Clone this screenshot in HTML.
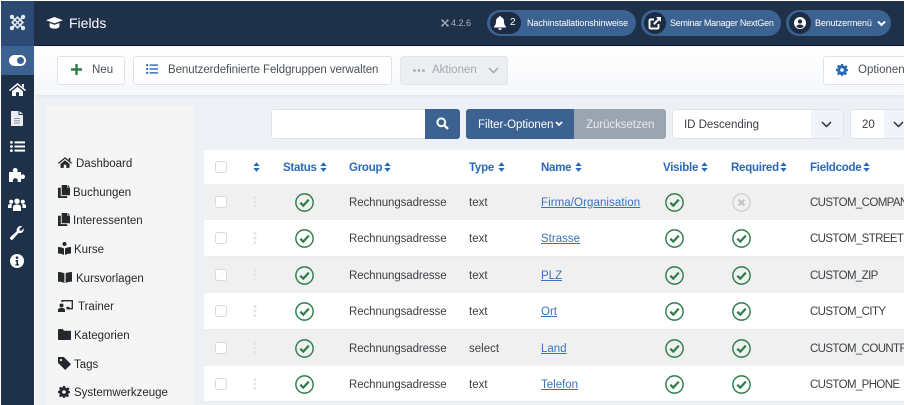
<!DOCTYPE html>
<html lang="de"><head><meta charset="utf-8"><title>Fields</title>
<style>
*{box-sizing:border-box}
html,body{margin:0;padding:0;background:#fff}
body{width:905px;height:405px;overflow:hidden;position:relative;font-family:"Liberation Sans",sans-serif;font-size:12px;color:#3a3f45}
.a{position:absolute;white-space:nowrap}
svg{position:absolute;display:block}
.btn{position:absolute;background:#fff;border:1px solid #dfe3e7;border-radius:3px;height:29px;top:56px}
.th{position:absolute;top:161px;font-weight:bold;color:#2a69b8;font-size:11.5px;white-space:nowrap;line-height:14px;letter-spacing:-.25px}
.row{position:absolute;left:204px;width:700px;height:36.4px}
.row.g{background:#f0f0f0}.row.w{background:#fff;border-bottom:1px solid #e9edf2}
.t{position:absolute;white-space:nowrap;font-size:11.5px;color:#3b3f44;line-height:14px;top:12px}
.r{letter-spacing:-.1px}
.c{font-size:11.5px;letter-spacing:-.62px;left:606px}
.l{color:#3a72bd;text-decoration:underline}
.cb{position:absolute;left:11px;width:12px;height:12px;border:1px solid #d8dade;border-radius:3px;background:#fff}
.m{position:absolute;font-size:11.5px;color:#24282c;white-space:nowrap;line-height:14px;margin-top:1px}
.bt{font-size:11.5px;color:#4a5058;line-height:15px}
</style></head><body>
<svg width="0" height="0"><defs>
<symbol id="ok" viewBox="0 0 20 20"><circle cx="10" cy="10" r="9.100" fill="none" stroke="#2f7d4a" stroke-width="1.500"/><path d="M5.600 10.200l3.100 3.100 5.800-6.300" fill="none" stroke="#2f7d4a" stroke-width="2.400"/></symbol>
<symbol id="no" viewBox="0 0 20 20"><circle cx="10" cy="10" r="9.100" fill="none" stroke="#d2d2d2" stroke-width="1.500"/><path d="M7 7l6 6M13 7l-6 6" fill="none" stroke="#c4c4c4" stroke-width="2.400"/></symbol>
<symbol id="sort" viewBox="0 0 8 11"><path d="M4 0l3.600 4.300H.4zM4 11L.4 6.700h7.200z" fill="#2a69b8"/></symbol>
<symbol id="doc" viewBox="0 0 13 14"><path d="M4 0h6v3h3v8H4z" fill="#24282c"/><path d="M10.600 0L13 2.400h-2.400zM0 3h3v9h7v2H0z" fill="#24282c"/></symbol>
<symbol id="dots" viewBox="0 0 4 12"><circle cx="2" cy="1.500" r="1.400" fill="#e3e3e3"/><circle cx="2" cy="6" r="1.400" fill="#e3e3e3"/><circle cx="2" cy="10.500" r="1.400" fill="#e3e3e3"/></symbol>
</defs></svg>

<!-- main background -->
<div class="a" style="left:35px;top:46px;width:869px;height:359px;background:#edf1f6"></div>
<div class="a" style="left:35px;top:47px;width:869px;height:48px;background:linear-gradient(#fff,#f5f7fa);box-shadow:0 1px 3px rgba(120,140,170,.12)"></div>

<!-- header -->
<div class="a" style="left:1px;top:1px;width:903px;height:45px;background:#1f3049"></div>
<div class="a" style="left:1px;top:1px;width:33px;height:45px;background:#2c4a73"></div>
<div class="a" style="left:35px;top:45px;width:869px;height:1px;background:#101b2b"></div>
<svg style="left:9px;top:14px" width="17" height="17" viewBox="0 0 15 15"><g fill="none" stroke="#e4e8ee" stroke-width="1.500"><path d="M3 3l2 2M12 3l-2 2M3 12l2-2M12 12l-2-2"/><path d="M7.500 2.800L12.200 7.500 7.500 12.200 2.800 7.500z"/><path d="M5.200 5.200l4.600 4.600M9.800 5.200l-4.600 4.600" stroke-width="1.200"/></g><g fill="#e4e8ee"><circle cx="2.600" cy="2.600" r="1.900"/><circle cx="12.400" cy="2.600" r="1.900"/><circle cx="2.600" cy="12.400" r="1.900"/><circle cx="12.400" cy="12.400" r="1.900"/></g></svg>
<svg style="left:46px;top:17px" width="17" height="13" viewBox="0 0 17 13"><path d="M8.500 0L17 3.200 8.500 6.400 0 3.200z" fill="#fff"/><path d="M3.600 6v3.200c0 1.400 2.200 2.400 4.900 2.400s4.900-1 4.900-2.400V6L8.500 7.900z" fill="#fff"/></svg>
<div class="a" style="left:69px;top:15px;font-size:14px;color:#fff;line-height:17px">Fields</div>

<svg style="left:441px;top:19px" width="8" height="8" viewBox="0 0 15 15"><g fill="none" stroke="#a9b3c1" stroke-width="2.400"><path d="M3 3l9 9M12 3l-9 9"/></g><g fill="#a9b3c1"><circle cx="2.600" cy="2.600" r="2"/><circle cx="12.400" cy="2.600" r="2"/><circle cx="2.600" cy="12.400" r="2"/><circle cx="12.400" cy="12.400" r="2"/></g></svg>
<div class="a" style="left:451px;top:18px;font-size:9px;color:#aab4c2;line-height:11px">4.2.6</div>

<div class="a" style="left:487px;top:10px;width:149px;height:26px;border-radius:13px;background:#3b6290"></div>
<div class="a" style="left:490px;top:12px;width:31px;height:22px;border-radius:11px;background:#1c2c44"></div>
<svg style="left:494px;top:16px" width="12" height="14" viewBox="0 0 12 14"><path d="M6 0c.7 0 1 .5 1 1.100C9.200 1.600 10 3.400 10 5.500c0 3 1 4 2 5v1H0v-1c1-1 2-2 2-5C2 3.400 2.800 1.600 5 1.100 5 .5 5.300 0 6 0z" fill="#fff"/><path d="M4.300 12.300h3.400a1.700 1.700 0 0 1-3.400 0z" fill="#fff"/></svg>
<div class="a" style="left:510px;top:17px;font-size:10px;color:#fff;line-height:12px">2</div>
<div class="a" style="left:527px;top:17px;font-size:9px;color:#fff;line-height:12px;letter-spacing:-.08px">Nachinstallationshinweise</div>

<div class="a" style="left:641px;top:10px;width:140px;height:26px;border-radius:13px;background:#3b6290"></div>
<div class="a" style="left:644px;top:12px;width:22px;height:22px;border-radius:11px;background:#1c2c44"></div>
<svg style="left:648px;top:16px" width="14" height="14" viewBox="0 0 14 14"><path d="M10.500 8v3.500a1 1 0 0 1-1 1h-7a1 1 0 0 1-1-1v-7a1 1 0 0 1 1-1H6" fill="none" stroke="#fff" stroke-width="1.900"/><path d="M8 1h5v5l-1.800-1.800L6.500 9 5 7.500l4.800-4.700z" fill="#fff"/></svg>
<div class="a" style="left:670px;top:17px;font-size:9px;color:#fff;line-height:12px;letter-spacing:-.26px">Seminar Manager NextGen</div>

<div class="a" style="left:786px;top:10px;width:105px;height:26px;border-radius:13px;background:#3b6290"></div>
<div class="a" style="left:789px;top:12px;width:22px;height:22px;border-radius:11px;background:#1c2c44"></div>
<svg style="left:794px;top:17px" width="12" height="12" viewBox="0 0 12 12"><circle cx="6" cy="6" r="6" fill="#fff"/><circle cx="6" cy="4.500" r="2.100" fill="#1c2c44"/><path d="M2.300 9.600C3 8.100 4.300 7.500 6 7.500s3 .6 3.700 2.100A5 5 0 0 1 6 11a5 5 0 0 1-3.700-1.400z" fill="#1c2c44"/></svg>
<div class="a" style="left:815px;top:17px;font-size:9px;color:#fff;line-height:12px;letter-spacing:-.15px">Benutzermenü</div>
<svg style="left:877px;top:20px" width="9" height="7" viewBox="0 0 9 7"><path d="M1 1.500l3.500 3.500L8 1.500" fill="none" stroke="#fff" stroke-width="2"/></svg>

<!-- sidebar -->
<div class="a" style="left:1px;top:46px;width:33px;height:359px;background:#1f3049"></div>
<div class="a" style="left:1px;top:46px;width:33px;height:29px;background:#3b6290"></div>
<svg style="left:9px;top:55px" width="17" height="11" viewBox="0 0 17 11"><rect width="17" height="11" rx="5.500" fill="#fff"/><circle cx="11.500" cy="5.500" r="3.500" fill="#3b6290"/></svg>
<svg style="left:9px;top:83px" width="17" height="13" viewBox="0 0 17 13"><path d="M8.500 0L17 7l-1 1.100-7.500-6.100L1 8.100 0 7z" fill="#fff"/><path d="M13 1h2v4l-2-1.600zM3 8.300l5.500-4.500L14 8.300V13h-4V9.300H7V13H3z" fill="#fff"/></svg>
<svg style="left:11px;top:111px" width="12" height="15" viewBox="0 0 12 15"><path d="M0 0h7.500v4H12v11H0z" fill="#e9ebee"/><path d="M8.500 0L12 3H8.500z" fill="#e9ebee"/><path d="M3 7.500h6M3 9.800h6M3 12h6" stroke="#8c95a2" stroke-width="1"/></svg>
<svg style="left:10px;top:141px" width="15" height="11" viewBox="0 0 15 11"><g fill="#fff"><circle cx="1.400" cy="1.400" r="1.400"/><circle cx="1.400" cy="5.500" r="1.400"/><circle cx="1.400" cy="9.600" r="1.400"/><rect x="4.500" y=".4" width="10.500" height="2"/><rect x="4.500" y="4.500" width="10.500" height="2"/><rect x="4.500" y="8.600" width="10.500" height="2"/></g></svg>
<svg style="left:9px;top:168px" width="16" height="14" viewBox="0 0 16 14"><path d="M0 4h4.300C4 3.300 3.800 2.900 3.800 2.200 3.800 1 4.900 0 6.200 0s2.400 1 2.400 2.200c0 .7-.2 1.100-.5 1.800H12v3c.6-.4 1-.6 1.700-.6C15 6.400 16 7.400 16 8.700S15 11 13.700 11c-.7 0-1.100-.2-1.700-.6V14H8.500c.3-.7.300-1 .3-1.500 0-1.200-1.100-2.200-2.500-2.200s-2.500 1-2.500 2.200c0 .5.100.8.300 1.500H0z" fill="#fff"/></svg>
<svg style="left:8px;top:198px" width="18" height="13" viewBox="0 0 18 13"><g fill="#fff"><circle cx="9" cy="3.200" r="2.700"/><circle cx="3.200" cy="3.700" r="2"/><circle cx="14.800" cy="3.700" r="2"/><path d="M5 13V9.500C5 7.500 6.500 6.500 9 6.500s4 1 4 3V13z"/><path d="M0 10V8c0-1.300 1-2 2.500-2 .6 0 1 .1 1.400.3C3.700 7 3.600 8 3.600 10zM18 10V8c0-1.300-1-2-2.500-2-.6 0-1 .1-1.400.3.300.7.400 1.700.4 3.700z"/></g></svg>
<svg style="left:10px;top:225px" width="14" height="15" viewBox="0 0 14 15"><path d="M13.700 3.200c.6 2.300-1.100 4.900-3.700 4.900-.5 0-.9-.1-1.300-.2L3 14.200c-.7.800-1.800.9-2.500.2-.8-.7-.7-1.800.1-2.500l6.200-5.600c-.7-2.700 1.400-5.300 4.100-5.300.5 0 .9.100 1.300.2L9.400 3.800l.4 1.700 1.700.4z" fill="#fff"/></svg>
<svg style="left:10px;top:254px" width="14" height="14" viewBox="0 0 14 14"><circle cx="7" cy="7" r="7" fill="#fff"/><circle cx="7" cy="3.700" r="1.300" fill="#1f3049"/><path d="M5.500 6h2.600v4.300h1v1.200H5.300v-1.200h1.100V7.200H5.500z" fill="#1f3049"/></svg>

<!-- toolbar -->
<div class="btn" style="left:57px;width:68px"></div>
<svg style="left:71px;top:64px" width="11" height="11" viewBox="0 0 11 11"><path d="M4.300 0h2.400v4.300H11v2.400H6.700V11H4.300V6.700H0V4.300h4.300z" fill="#2f7d4a"/></svg>
<div class="a bt" style="left:92px;top:63px">Neu</div>
<div class="btn" style="left:133px;width:259px"></div>
<svg style="left:146px;top:64px" width="12" height="10" viewBox="0 0 12 10"><g fill="#2a69b8"><circle cx="1.100" cy="1.100" r="1.100"/><circle cx="1.100" cy="5" r="1.100"/><circle cx="1.100" cy="8.900" r="1.100"/><rect x="3.500" y=".4" width="8.500" height="1.400"/><rect x="3.500" y="4.300" width="8.500" height="1.400"/><rect x="3.500" y="8.200" width="8.500" height="1.400"/></g></svg>
<div class="a bt" style="left:168px;top:63px;letter-spacing:-.08px">Benutzerdefinierte Feldgruppen verwalten</div>
<div class="btn" style="left:400px;width:108px;background:#eceef1;border-color:#e2e5e9"></div>
<svg style="left:413px;top:69px" width="12" height="3" viewBox="0 0 12 3"><g fill="#9aa1aa"><circle cx="1.500" cy="1.500" r="1.300"/><circle cx="6" cy="1.500" r="1.300"/><circle cx="10.500" cy="1.500" r="1.300"/></g></svg>
<div class="a bt" style="left:432px;top:63px;color:#a3a9b1">Aktionen</div>
<svg style="left:488px;top:67px" width="11" height="7" viewBox="0 0 11 7"><path d="M1 1l4.500 4.500L10 1" fill="none" stroke="#a3a9b1" stroke-width="1.500"/></svg>
<div class="btn" style="left:823px;width:90px"></div>
<svg style="left:836px;top:64px" width="12" height="12" viewBox="0 0 12 12"><path d="M4.900 0h2.200l.3 1.600 1.200.5L10 1.200l1.500 1.500-.9 1.400.5 1.200L12 5v2l-1.400.3-.5 1.200.9 1.400L9.500 11.300l-1.400-.9-1.200.5L6.800 12H5.200l-.3-1.100-1.200-.5-1.400.9L1 9.900l.9-1.400-.5-1.200L0 7V5l1.400-.3.5-1.200L1 2.100 2.500.7l1.400.9 1-.4z" fill="#2a69b8"/><circle cx="6" cy="6" r="1.800" fill="#fff"/></svg>
<div class="a bt" style="left:858px;top:63px">Optionen</div>

<!-- sub nav panel -->
<div class="a" style="left:46px;top:106px;width:147px;height:299px;background:#f5f5f5"></div>
<svg style="left:58px;top:157px" width="14" height="11" viewBox="0 0 17 13"><path d="M8.500 0L17 7l-1 1.100-7.500-6.100L1 8.100 0 7z" fill="#24282c"/><path d="M13 1h2v4l-2-1.600zM3 8.300l5.500-4.500L14 8.300V13h-4V9.300H7V13H3z" fill="#24282c"/></svg>
<div class="m" style="left:76px;top:156px">Dashboard</div>
<svg style="left:58px;top:185px" width="12" height="13"><use href="#doc"/></svg>
<div class="m" style="left:73px;top:185px">Buchungen</div>
<svg style="left:58px;top:213px" width="12" height="13"><use href="#doc"/></svg>
<div class="m" style="left:73px;top:213px">Interessenten</div>
<svg style="left:58px;top:242px" width="13" height="13" viewBox="0 0 13 13"><circle cx="6.500" cy="2" r="2" fill="#24282c"/><path d="M0 5c2.200 0 4.400.5 6 1.500V13c-1.600-1-3.800-1.500-6-1.500zM13 5c-2.200 0-4.400.5-6 1.500V13c1.600-1 3.800-1.500 6-1.500z" fill="#24282c"/></svg>
<div class="m" style="left:74px;top:242px">Kurse</div>
<svg style="left:58px;top:272px" width="14" height="11" viewBox="0 0 14 11"><path d="M0 0c2.500 0 4.800.4 6.400 1.400V11C4.800 10 2.500 9.600 0 9.600zM14 0c-2.500 0-4.800.4-6.400 1.400V11c1.600-1 3.900-1.400 6.400-1.400z" fill="#24282c"/></svg>
<div class="m" style="left:76px;top:271px">Kursvorlagen</div>
<svg style="left:58px;top:300px" width="15" height="12" viewBox="0 0 15 12"><circle cx="3.500" cy="5.500" r="2" fill="#24282c"/><path d="M0 12V10c0-1.300 1.200-2 3.500-2S7 8.700 7 10v2z" fill="#24282c"/><path d="M4 2V.7h10.300v8H8.500" fill="none" stroke="#24282c" stroke-width="1.300"/><path d="M8.500 7.500h3" stroke="#24282c" stroke-width="1.300"/></svg>
<div class="m" style="left:78px;top:299px">Trainer</div>
<svg style="left:58px;top:329px" width="13" height="11" viewBox="0 0 13 11"><path d="M0 1a1 1 0 0 1 1-1h3.500l1.500 1.800h6a1 1 0 0 1 1 1V10a1 1 0 0 1-1 1H1a1 1 0 0 1-1-1z" fill="#24282c"/></svg>
<div class="m" style="left:74px;top:328px">Kategorien</div>
<svg style="left:58px;top:357px" width="13" height="13" viewBox="0 0 13 13"><path d="M0 0h5.800L13 7.200 7.200 13 0 5.800z" fill="#24282c"/><circle cx="3" cy="3" r="1.100" fill="#f5f5f5"/></svg>
<div class="m" style="left:74px;top:357px">Tags</div>
<svg style="left:58px;top:386px" width="12" height="12" viewBox="0 0 12 12"><path d="M4.900 0h2.200l.3 1.600 1.200.5L10 1.200l1.500 1.500-.9 1.400.5 1.200L12 5v2l-1.400.3-.5 1.200.9 1.400L9.500 11.300l-1.400-.9-1.200.5L6.800 12H5.200l-.3-1.100-1.200-.5-1.400.9L1 9.900l.9-1.400-.5-1.200L0 7V5l1.400-.3.5-1.200L1 2.100 2.500.7l1.400.9 1-.4z" fill="#24282c"/><circle cx="6" cy="6" r="1.800" fill="#f5f5f5"/></svg>
<div class="m" style="left:74px;top:385px">Systemwerkzeuge</div>

<!-- filter bar -->
<div class="a" style="left:271px;top:109px;width:155px;height:30px;background:#fff;border:1px solid #dce3ec;border-radius:3px 0 0 3px"></div>
<div class="a" style="left:425px;top:109px;width:35px;height:30px;background:#3b6290;border-radius:0 3px 3px 0"></div>
<svg style="left:436px;top:117px" width="13" height="13" viewBox="0 0 13 13"><circle cx="5.300" cy="5.300" r="3.900" fill="none" stroke="#fff" stroke-width="2"/><path d="M8.300 8.300l3.700 3.700" stroke="#fff" stroke-width="2.300"/></svg>
<div class="a" style="left:466px;top:109px;width:108px;height:30px;background:#3b6290;border-radius:3px 0 0 3px"></div>
<div class="a" style="left:478px;top:118px;font-size:11.5px;color:#fff;line-height:14px;letter-spacing:-.04px">Filter-Optionen</div>
<svg style="left:555px;top:121px" width="8" height="6" viewBox="0 0 8 6"><path d="M1 1l3 3 3-3" fill="none" stroke="#fff" stroke-width="1.800"/></svg>
<div class="a" style="left:574px;top:109px;width:92px;height:30px;background:#9ba5b1;border-radius:0 3px 3px 0"></div>
<div class="a" style="left:586px;top:118px;font-size:11.5px;color:#e7eaee;line-height:14px;letter-spacing:-.06px">Zurücksetzen</div>
<div class="a" style="left:672px;top:109px;width:172px;height:30px;background:#fff;border:1px solid #dce3ec;border-radius:3px"></div>
<div class="a" style="left:811px;top:110px;width:32px;height:28px;background:#f0f4fa"></div>
<div class="a" style="left:684px;top:118px;font-size:11.5px;color:#3b3f44;line-height:14px;letter-spacing:-.03px">ID Descending</div>
<svg style="left:821px;top:121px" width="11" height="7" viewBox="0 0 11 7"><path d="M1 1l4.500 4.500L10 1" fill="none" stroke="#24282c" stroke-width="1.400"/></svg>
<div class="a" style="left:850px;top:109px;width:54px;height:30px;background:#fff;border:1px solid #dce3ec;border-right:0;border-radius:3px 0 0 3px"></div>
<div class="a" style="left:884px;top:110px;width:20px;height:28px;background:#f0f4fa"></div>
<div class="a" style="left:862px;top:118px;font-size:11.5px;color:#3b3f44;line-height:14px">20</div>
<svg style="left:893px;top:121px" width="11" height="7" viewBox="0 0 11 7"><path d="M1 1l4.500 4.500L10 1" fill="none" stroke="#24282c" stroke-width="1.400"/></svg>

<!-- table header -->
<div class="a" style="left:204px;top:150px;width:700px;height:34px;background:#fff"></div>
<div class="a" style="left:215px;top:161px;width:12px;height:12px;border:1px solid #d8dade;border-radius:3px;background:#fff"></div>
<svg style="left:253px;top:162px" width="7" height="10"><use href="#sort"/></svg>
<div class="th" style="left:283px">Status</div><svg style="left:320px;top:162px" width="7" height="10"><use href="#sort"/></svg>
<div class="th" style="left:349px">Group</div><svg style="left:384px;top:162px" width="7" height="10"><use href="#sort"/></svg>
<div class="th" style="left:469px">Type</div><svg style="left:498px;top:162px" width="7" height="10"><use href="#sort"/></svg>
<div class="th" style="left:541px">Name</div><svg style="left:575px;top:162px" width="7" height="10"><use href="#sort"/></svg>
<div class="th" style="left:663px">Visible</div><svg style="left:701px;top:162px" width="7" height="10"><use href="#sort"/></svg>
<div class="th" style="left:731px">Required</div><svg style="left:780px;top:162px" width="7" height="10"><use href="#sort"/></svg>
<div class="th" style="left:810px">Fieldcode</div><svg style="left:863px;top:162px" width="7" height="10"><use href="#sort"/></svg>

<!-- rows -->
<div class="row g" style="top:184px"><div class="cb" style="top:12px"></div><svg style="left:49px;top:12px" width="4" height="12"><use href="#dots"/></svg><svg style="left:91px;top:9px" width="19" height="19"><use href="#ok"/></svg><div class="t r" style="left:145px">Rechnungsadresse</div><div class="t" style="left:265px">text</div><div class="t l" style="left:337px;letter-spacing:.08px">Firma/Organisation</div><svg style="left:461px;top:9px" width="19" height="19"><use href="#ok"/></svg><svg style="left:528px;top:9px" width="19" height="19"><use href="#no"/></svg><div class="t c">CUSTOM_COMPANY</div></div>
<div class="row w" style="top:220.4px"><div class="cb" style="top:12px"></div><svg style="left:49px;top:12px" width="4" height="12"><use href="#dots"/></svg><svg style="left:91px;top:9px" width="19" height="19"><use href="#ok"/></svg><div class="t r" style="left:145px">Rechnungsadresse</div><div class="t" style="left:265px">text</div><div class="t l" style="left:337px">Strasse</div><svg style="left:461px;top:9px" width="19" height="19"><use href="#ok"/></svg><svg style="left:528px;top:9px" width="19" height="19"><use href="#ok"/></svg><div class="t c">CUSTOM_STREET</div></div>
<div class="row g" style="top:256.8px"><div class="cb" style="top:12px"></div><svg style="left:49px;top:12px" width="4" height="12"><use href="#dots"/></svg><svg style="left:91px;top:9px" width="19" height="19"><use href="#ok"/></svg><div class="t r" style="left:145px">Rechnungsadresse</div><div class="t" style="left:265px">text</div><div class="t l" style="left:337px">PLZ</div><svg style="left:461px;top:9px" width="19" height="19"><use href="#ok"/></svg><svg style="left:528px;top:9px" width="19" height="19"><use href="#ok"/></svg><div class="t c">CUSTOM_ZIP</div></div>
<div class="row w" style="top:293.2px"><div class="cb" style="top:12px"></div><svg style="left:49px;top:12px" width="4" height="12"><use href="#dots"/></svg><svg style="left:91px;top:9px" width="19" height="19"><use href="#ok"/></svg><div class="t r" style="left:145px">Rechnungsadresse</div><div class="t" style="left:265px">text</div><div class="t l" style="left:337px">Ort</div><svg style="left:461px;top:9px" width="19" height="19"><use href="#ok"/></svg><svg style="left:528px;top:9px" width="19" height="19"><use href="#ok"/></svg><div class="t c">CUSTOM_CITY</div></div>
<div class="row g" style="top:329.6px"><div class="cb" style="top:12px"></div><svg style="left:49px;top:12px" width="4" height="12"><use href="#dots"/></svg><svg style="left:91px;top:9px" width="19" height="19"><use href="#ok"/></svg><div class="t r" style="left:145px">Rechnungsadresse</div><div class="t" style="left:265px">select</div><div class="t l" style="left:337px">Land</div><svg style="left:461px;top:9px" width="19" height="19"><use href="#ok"/></svg><svg style="left:528px;top:9px" width="19" height="19"><use href="#ok"/></svg><div class="t c">CUSTOM_COUNTRY</div></div>
<div class="row w" style="top:366px"><div class="cb" style="top:12px"></div><svg style="left:49px;top:12px" width="4" height="12"><use href="#dots"/></svg><svg style="left:91px;top:9px" width="19" height="19"><use href="#ok"/></svg><div class="t r" style="left:145px">Rechnungsadresse</div><div class="t" style="left:265px">text</div><div class="t l" style="left:337px">Telefon</div><svg style="left:461px;top:9px" width="19" height="19"><use href="#ok"/></svg><svg style="left:528px;top:9px" width="19" height="19"><use href="#ok"/></svg><div class="t c">CUSTOM_PHONE</div></div>
<div class="a" style="left:904px;top:0;width:1px;height:405px;background:#fff"></div>
</body></html>
